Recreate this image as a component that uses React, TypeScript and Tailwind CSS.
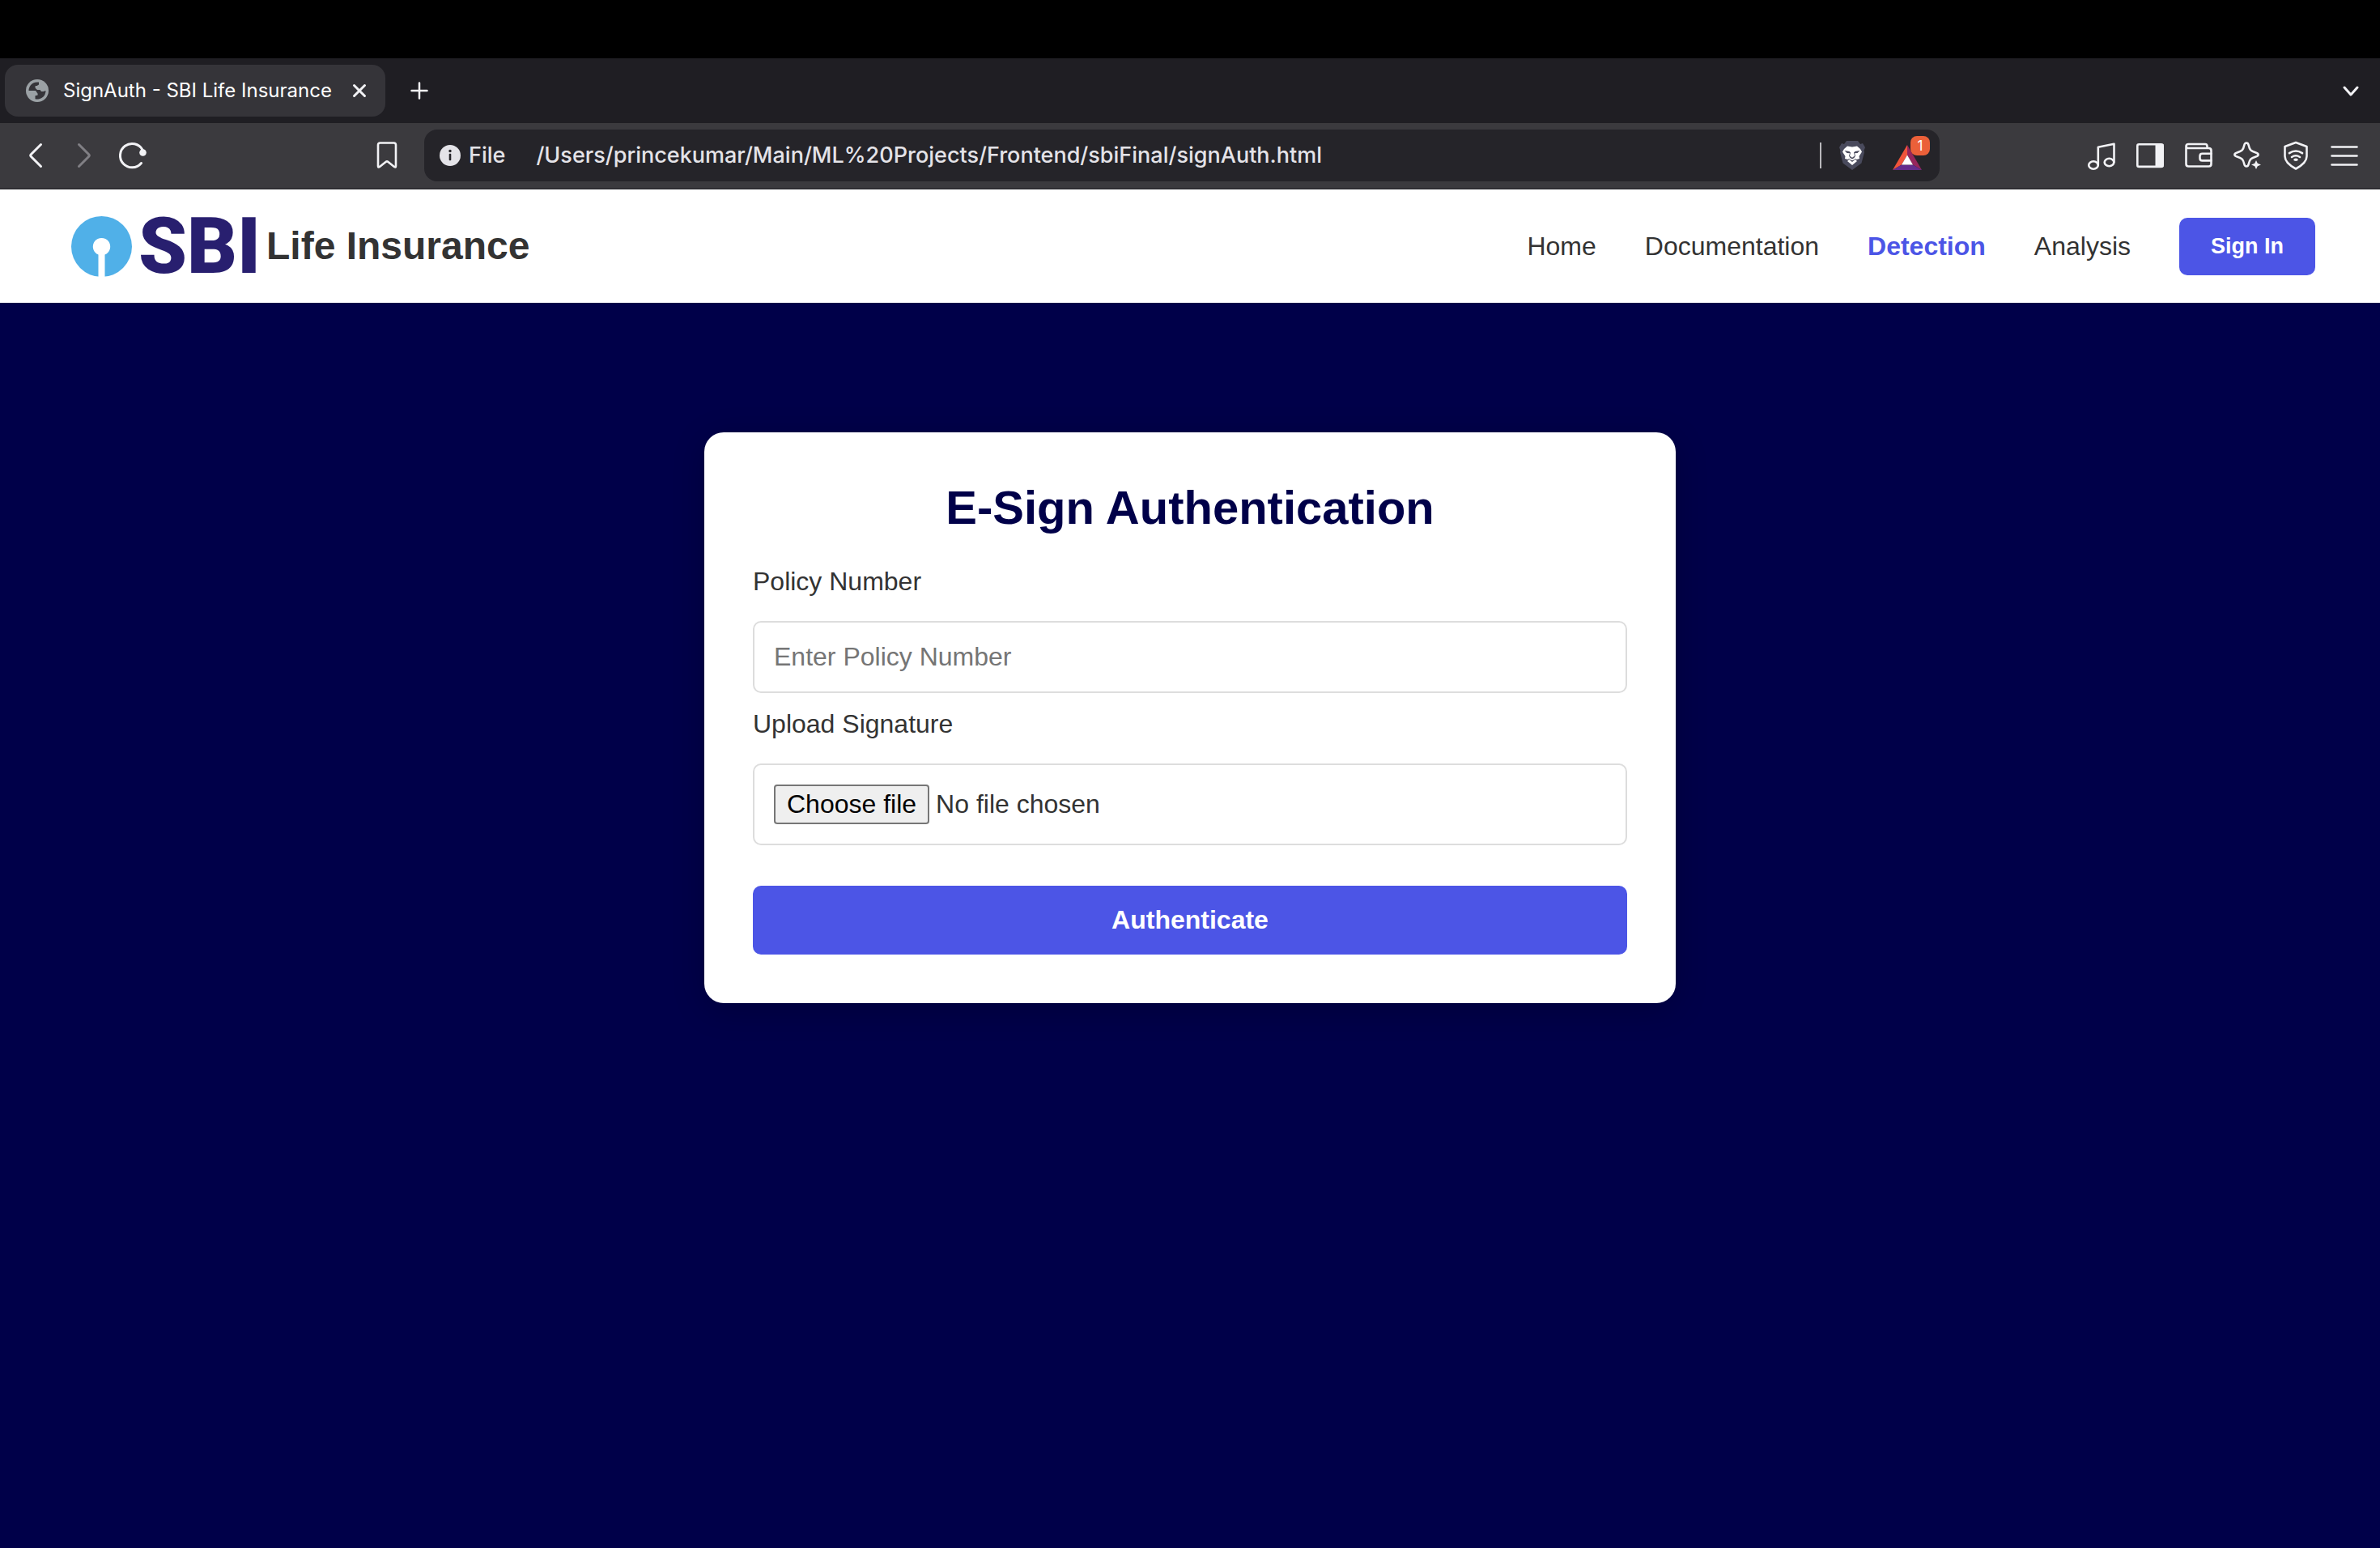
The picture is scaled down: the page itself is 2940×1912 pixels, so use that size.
import type { ReactNode } from "react";

const stroke = {
  fill: "none",
  stroke: "currentColor",
  strokeWidth: 3,
  strokeLinecap: "round" as const,
  strokeLinejoin: "round" as const,
};

function ToolButton({ label, children, dim }: { label: string; children: ReactNode; dim?: boolean }) {
  return (
    <button
      type="button"
      aria-label={label}
      disabled={dim}
      className={`flex size-10 shrink-0 items-center justify-center ${dim ? "text-[#807f84]" : "text-[#f2f2f5]"}`}
    >
      <svg viewBox="0 0 40 40" className="size-10" aria-hidden="true">
        {children}
      </svg>
    </button>
  );
}

function Globe() {
  return (
    <svg viewBox="0 0 28 28" className="size-7 shrink-0" aria-hidden="true">
      <circle cx="14" cy="14" r="14" fill="#9ba1a5" />
      <path
        d="M3.5 14A10.5 10.5 0 0 1 16 3.6V6.6L13.6 8H11.6V10.8L14 13H17.5L19 15H21.5L24.5 14A10.5 10.5 0 0 1 11.5 24.3V20.2L14.6 19.6V17.8L12 14Z"
        fill="#353439"
      />
    </svg>
  );
}

function TabStrip() {
  return (
    <div className="flex h-20 items-center bg-[#1f1e23] pr-[26px] pl-[6px]">
      <div className="flex h-16 w-[470px] items-center rounded-2xl bg-[#353439] pr-4 pl-[26px]">
        <Globe />
        <span className="ml-[18px] flex-1 text-[24px] leading-8 whitespace-nowrap text-white">
          SignAuth - SBI Life Insurance
        </span>
        <button type="button" aria-label="Close tab" className="flex size-8 items-center justify-center text-[#f2f2f5]">
          <svg viewBox="0 0 32 32" className="size-8" aria-hidden="true">
            <path d="M9.5 9.5l13 13M22.5 9.5l-13 13" {...stroke} />
          </svg>
        </button>
      </div>
      <button type="button" aria-label="New tab" className="ml-[22px] text-[#f2f2f5]">
        <svg viewBox="0 0 40 40" className="size-10" aria-hidden="true">
          <path d="M20 10.5v19M10.5 20h19" {...stroke} strokeWidth={2.5} />
        </svg>
      </button>
      <button type="button" aria-label="Search tabs" className="ml-auto text-[#f2f2f5]">
        <svg viewBox="0 0 20 20" className="size-5" aria-hidden="true">
          <path d="M2 6l8 9 8-9" {...stroke} />
        </svg>
      </button>
    </div>
  );
}

function BraveShield() {
  return (
    <svg viewBox="0 0 32 36" className="h-9 w-8" aria-hidden="true">
      <path
        d="M9 0h14l3 4 3-1 3 5-1.500 4 .5 2-3.500 13.500L16 36 4.500 27.500 1 14l.5-2L0 8l3-5 3 1z"
        fill="#494a5c"
      />
      <path
        d="M10 6.500l6 1 6-1 4 3.500 2 3.500-3.500 5.500.5 3-3.500 1-3-1.500L22 25l-6 5-6-5 3.500-3.500-3 1.500L7 22l.5-3L4 13.500l2-3.500z"
        fill="#fff"
      />
      <path
        d="M6.500 12l6 1 1.500 1.500-1 4 3 2.200 3-2.200-1-4 1.500-1.500 6-1-3 3-3.500.3 1 3.200-1.500 2.500-2.500 1.500-2.500-1.500-1.500-2.500 1-3.200-3.500-.3zM11 22l5 2.200 5-2.200-5 4z"
        fill="#494a5c"
      />
    </svg>
  );
}

function AddressBar() {
  return (
    <div className="flex h-16 min-w-0 items-center rounded-2xl bg-[#252429] pr-3 pl-[19px] text-[#e4e3e8]">
      <svg viewBox="0 0 26 26" className="size-[26px] shrink-0" aria-hidden="true">
        <circle cx="13" cy="13" r="13" fill="currentColor" />
        <circle cx="13" cy="7.500" r="1.700" fill="#252429" />
        <rect x="11.700" y="10.800" width="2.600" height="8.500" rx="1" fill="#252429" />
      </svg>
      <span className="ml-[10px] text-[27px] leading-8 font-medium">File</span>
      <span className="ml-[38px] flex-1 truncate text-[27px] leading-8 font-medium">
        /Users/princekumar/Main/ML%20Projects/Frontend/sbiFinal/signAuth.html
      </span>
      <span className="h-8 w-[2px] bg-[#b9b8bc]" />
      <button type="button" aria-label="Brave Shields" className="ml-[22px]">
        <BraveShield />
      </button>
      <button type="button" aria-label="Brave Rewards" className="relative ml-[34px] h-10 w-[46px]">
        <svg viewBox="0 0 36 31" className="mt-1 h-[31px] w-9" aria-hidden="true">
          <path d="M18 0L0 31 11 24.500 18 12.500z" fill="#f0543a" />
          <path d="M18 0l18 31-11-6.500-7-12z" fill="#97265c" />
          <path d="M0 31h36l-11-6.500H11z" fill="#652d8c" />
          <path d="M18 12.500l7 12H11z" fill="#fff" />
        </svg>
        <span className="absolute -top-1 right-0 flex size-6 items-center justify-center rounded-lg bg-[#eb6039] text-[17px] leading-6 text-white">
          1
        </span>
      </button>
    </div>
  );
}

function Toolbar() {
  return (
    <div className="grid grid-cols-[524px_1fr_544px] items-center border-b-2 border-[#2f2e33] bg-[#3b3a3e] py-2">
      <div className="flex items-center gap-5 pr-[26px] pl-6">
        <ToolButton label="Back">
          <path d="M26.500 6.500l-12 12q-1.500 1.500 0 3l12 12" {...stroke} />
        </ToolButton>
        <ToolButton label="Forward" dim>
          <path d="M13.500 6.500l12 12q1.500 1.500 0 3l-12 12" {...stroke} />
        </ToolButton>
        <ToolButton label="Reload">
          <path d="M30.500 29.500A14.700 14.700 0 1 1 32 13" {...stroke} />
          <circle cx="32.500" cy="16.500" r="4.300" fill="currentColor" />
        </ToolButton>
        <div className="ml-auto flex">
          <ToolButton label="Bookmark">
            <path
              d="M11.500 4.500h17q2.500 0 2.500 2.500v26q0 2.500-2 1l-7.500-6q-1.500-1.200-3 0l-7.500 6q-2 1.500-2-1V7q0-2.500 2.500-2.500z"
              {...stroke}
              strokeWidth={2.600}
            />
          </ToolButton>
        </div>
      </div>
      <AddressBar />
      <div className="flex items-center justify-end gap-5 pr-6">
        <ToolButton label="Playlist">
          <g {...stroke} strokeWidth={2.600}>
            <ellipse cx="10" cy="32" rx="5.800" ry="4.700" />
            <ellipse cx="29.500" cy="28.500" rx="5.800" ry="4.700" />
            <path d="M15.800 31.500V9.800L35.500 5.800v22.500" />
          </g>
        </ToolButton>
        <ToolButton label="Sidebar">
          <rect x="4.300" y="6.300" width="31.400" height="27.600" rx="2" {...stroke} strokeWidth={2.600} />
          <rect x="26.500" y="6" width="10" height="28" fill="currentColor" />
        </ToolButton>
        <ToolButton label="Wallet">
          <g {...stroke} strokeWidth={2.600}>
            <path d="M4.500 9v21.500q0 3 3 3h25q3 0 3-3V14q0-3-3-3h-25q-3 0-3-2.500t3-2.500H28q2.500 0 2.500 2.500V11" />
            <path d="M35.500 17.800H24.500q-3 0-3 3v2.600q0 3 3 3h11" />
          </g>
        </ToolButton>
        <ToolButton label="Leo AI">
          <path
            d="M19 4.500q2 0 2.600 2.500c1.500 6.500 2.500 7.500 9 9.500q3 .9 3 2.500t-3 2.500c-6.500 2-7.500 3-9 9.500Q21 33.500 19 33.500T16.400 31c-1.500-6.500-2.500-7.500-9-9.500q-3-.9-3-2.500t3-2.500c6.500-2 7.500-3 9-9.500Q17 4.500 19 4.500z"
            {...stroke}
            strokeWidth={2.600}
          />
          <path
            d="M31 26l1.800 3.700 4.200 1.800-4.200 1.800-1.800 3.700-1.800-3.700-4.200-1.800 4.200-1.800z"
            fill="currentColor"
          />
        </ToolButton>
        <ToolButton label="VPN">
          <g {...stroke} strokeWidth={2.600}>
            <path d="M20 4l13.500 5v12c0 7-7 12-13.500 15.500C13.500 33 6.500 28 6.500 21V9z" />
            <path d="M12 17.200q8-5.400 16 0M15 22q5-3.400 10 0" />
          </g>
          <ellipse cx="20" cy="25.200" rx="2.800" ry="1.800" fill="currentColor" />
        </ToolButton>
        <ToolButton label="Menu">
          <path d="M4.500 9.500h31M4.500 20.500h31M4.500 31.500h31" {...stroke} strokeWidth={2.600} />
        </ToolButton>
      </div>
    </div>
  );
}

function Logo() {
  return (
    <a href="#home" aria-label="SBI Life Insurance" className="flex items-center">
      <svg viewBox="0 0 75 75" className="size-[75px]" aria-hidden="true">
        <circle cx="37.500" cy="37.500" r="37.500" fill="#50b0e8" />
        <path d="M33.500 47.500a10.700 10.700 0 1 1 8 0V75h-8z" fill="#fff" />
      </svg>
      <span className="ml-2 w-[140px] font-['Roboto',sans-serif] text-[96px] leading-[100px] font-black text-[#281f6f]">
        SBI
      </span>
      <span className="ml-[18px] text-[48px] leading-[56px] font-bold whitespace-nowrap text-[#333]">Life Insurance</span>
    </a>
  );
}

const links = [
  { text: "Home", active: false },
  { text: "Documentation", active: false },
  { text: "Detection", active: true },
  { text: "Analysis", active: false },
];

function SiteHeader() {
  return (
    <header className="flex h-[140px] items-center justify-between bg-white pr-20 pl-[88px]">
      <Logo />
      <nav className="flex items-center gap-[60px] text-[32px] leading-[37px]">
        {links.map((l) => (
          <a
            key={l.text}
            href={`#${l.text.toLowerCase()}`}
            aria-current={l.active ? "page" : undefined}
            className={l.active ? "font-bold text-[#4c55e6]" : "text-[#333]"}
          >
            {l.text}
          </a>
        ))}
        <button
          type="button"
          className="rounded-[10px] bg-[#4c55e6] px-[39px] py-5 text-[27px] leading-[31px] font-bold text-white"
        >
          Sign In
        </button>
      </nav>
    </header>
  );
}

function SignForm() {
  return (
    <form
      onSubmit={(e) => e.preventDefault()}
      className="flex w-full max-w-[1200px] flex-col rounded-3xl bg-white p-[60px] text-[32px] leading-[37px] text-[#333] shadow-[0_8px_40px_rgba(0,0,0,0.2)]"
    >
      <h1 className="mb-10 text-center text-[58px] leading-[66px] font-bold text-[#000049]">E-Sign Authentication</h1>
      <label htmlFor="policy" className="mb-[30px]">
        Policy Number
      </label>
      <input
        id="policy"
        type="text"
        placeholder="Enter Policy Number"
        className="mb-5 h-[89px] rounded-[10px] border-2 border-[#ddd] px-6 placeholder:text-[#757575]"
      />
      <label htmlFor="signature" className="mb-[30px]">
        Upload Signature
      </label>
      <label
        htmlFor="signature"
        className="relative mb-[50px] flex items-center gap-2 rounded-[10px] border-2 border-[#ddd] p-6"
      >
        <span className="rounded-[4px] border-2 border-[#767676] bg-[#efefef] px-[14px] py-1 text-black">
          Choose file
        </span>
        <span>No file chosen</span>
        <input id="signature" type="file" className="sr-only" />
      </label>
      <button type="submit" className="rounded-[10px] bg-[#4c55e6] py-6 font-bold text-white">
        Authenticate
      </button>
    </form>
  );
}

export default function App() {
  return (
    <div className="flex min-h-screen flex-col bg-[#000049] font-['Liberation_Sans',Arial,sans-serif]">
      <div className="bg-black pt-[72px] font-['Inter',sans-serif]">
        <TabStrip />
        <Toolbar />
      </div>
      <SiteHeader />
      <main className="flex flex-1 items-start justify-center px-6 pt-40 pb-20">
        <SignForm />
      </main>
    </div>
  );
}
